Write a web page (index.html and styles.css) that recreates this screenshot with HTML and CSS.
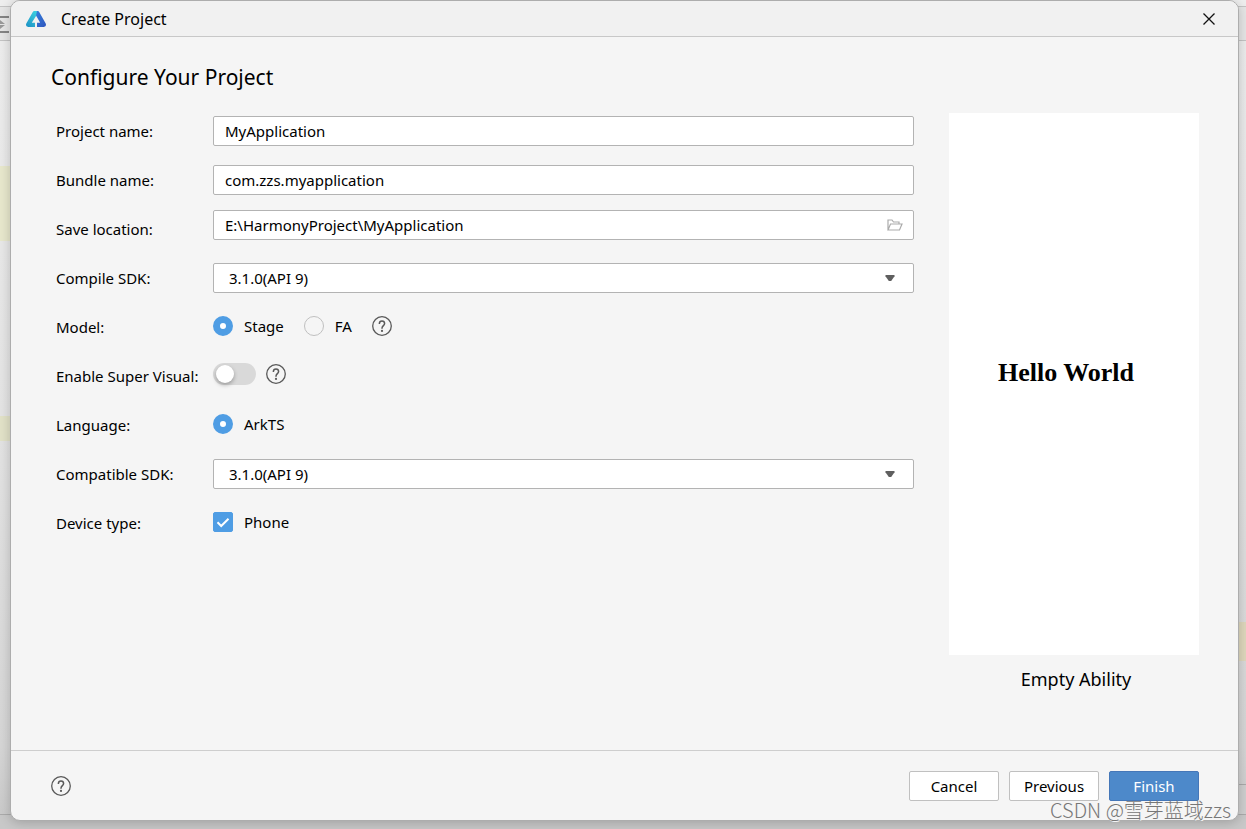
FILE: index.html
```html
<!DOCTYPE html>
<html lang="en">
<head>
<meta charset="utf-8">
<meta name="viewport" content="width=device-width, initial-scale=1">
<title>Create Project</title>
<link rel="stylesheet" href="styles.css">
</head>
<body>
<svg class="symbols" aria-hidden="true">
  <symbol id="help" viewBox="0 0 20 20">
    <circle cx="10" cy="10" r="9.3" fill="none" stroke="#595959" stroke-width="1.3"/>
    <path d="M7.4 8V7.6a2.6 2.6 0 0 1 5.2 0c0 1.9-2.6 2.3-2.6 4.6v.5" fill="none" stroke="#595959" stroke-width="1.5"/>
    <circle cx="10" cy="14.9" r="1.1" fill="#595959"/>
  </symbol>
  <symbol id="arrow" viewBox="0 0 10 6">
    <path d="M0.5 0h9v1.200L6.200 6h-2.400L0.500 1.200z" fill="#5f5f5f"/>
  </symbol>
</svg>
<div class="backdrop" aria-hidden="true">
  <div class="toolbar-edge">
    <svg class="align-icon" viewBox="0 0 9 19" width="9" height="19"><path d="M0 2h9M0 17h9" stroke="#858585" stroke-width="2"/><path d="M0 5l5 4H0zM0 14l5-4H0z" fill="#999"/></svg>
  </div>
  <div class="mark mark-one"></div>
  <div class="mark mark-two"></div>
  <div class="mark mark-three"></div>
  <div class="panel-edge"></div>
  <div class="status-edge"></div>
</div>
<div class="dialog" role="dialog" aria-labelledby="dialog-title">
  <header class="titlebar">
    <svg class="logo" viewBox="0 0 20 16" width="20" height="16" aria-hidden="true">
      <defs>
        <linearGradient id="left" x1="0" y1="1" x2="0.700" y2="0"><stop offset="0" stop-color="#1b8fc4"/><stop offset="1" stop-color="#3cd0df"/></linearGradient>
        <linearGradient id="right" x1="0" y1="0" x2="1" y2="1"><stop offset="0" stop-color="#347fdc"/><stop offset="1" stop-color="#2f55bd"/></linearGradient>
      </defs>
      <path d="M7.800 0H11l1.600 1.500L10.500 4.200 5.800 11.700H9V16H2.200Q-.8 15.600.3 12.600L6.800 1z" fill="url(#left)"/>
      <path d="M11 0h1.200l1 1 6.500 11.600q1.100 3-1.900 3.400H11v-4.300h3.200L10 4.600z" fill="url(#right)"/>
    </svg>
    <span id="dialog-title" class="title">Create Project</span>
    <button class="close" type="button" aria-label="Close"><svg viewBox="0 0 12 12" width="12" height="12"><path d="M.5.5l11 11M11.500.5l-11 11" stroke="#111" stroke-width="1.300" fill="none"/></svg></button>
  </header>
  <main class="content">
    <h1 class="heading">Configure Your Project</h1>
    <div class="columns">
      <form class="form">
        <div class="row">
          <label class="label" for="project">Project name:</label>
          <input class="field" id="project" type="text" value="MyApplication">
        </div>
        <div class="row">
          <label class="label" for="bundle">Bundle name:</label>
          <input class="field" id="bundle" type="text" value="com.zzs.myapplication">
        </div>
        <div class="row">
          <label class="label" for="location">Save location:</label>
          <div class="control control-raised">
            <input class="field" id="location" type="text" value="E:\HarmonyProject\MyApplication">
            <button class="browse" type="button" aria-label="Browse"><svg viewBox="0 0 16 12" width="16" height="12"><path d="M1 11V1h4l1.500 2H12v2M1 11l2.500-6H15l-2.500 6z" fill="none" stroke="#ababab" stroke-width="1.200"/></svg></button>
          </div>
        </div>
        <div class="row">
          <label class="label" for="compile">Compile SDK:</label>
          <div class="control">
            <select class="field select" id="compile"><option>3.1.0(API 9)</option></select>
            <svg class="arrow" width="10" height="6" aria-hidden="true"><use href="#arrow"/></svg>
          </div>
        </div>
        <div class="row" role="radiogroup" aria-labelledby="model-label">
          <span class="label" id="model-label">Model:</span>
          <div class="options">
            <label class="option"><input class="radio" type="radio" name="model" checked>Stage</label>
            <label class="option"><input class="radio" type="radio" name="model">FA</label>
            <button class="help" type="button" aria-label="About models"><svg width="20" height="20"><use href="#help"/></svg></button>
          </div>
        </div>
        <div class="row">
          <label class="label" for="visual">Enable Super Visual:</label>
          <div class="options options-switch">
            <input class="switch" id="visual" type="checkbox" role="switch">
            <button class="help" type="button" aria-label="About Super Visual"><svg width="20" height="20"><use href="#help"/></svg></button>
          </div>
        </div>
        <div class="row" role="radiogroup" aria-labelledby="language-label">
          <span class="label" id="language-label">Language:</span>
          <div class="options">
            <label class="option"><input class="radio" type="radio" name="language" checked>ArkTS</label>
          </div>
        </div>
        <div class="row">
          <label class="label" for="compatible">Compatible SDK:</label>
          <div class="control">
            <select class="field select" id="compatible"><option>3.1.0(API 9)</option></select>
            <svg class="arrow" width="10" height="6" aria-hidden="true"><use href="#arrow"/></svg>
          </div>
        </div>
        <div class="row">
          <span class="label">Device type:</span>
          <div class="options">
            <label class="option"><span class="tick"><input class="checkbox" type="checkbox" checked><svg class="tick-mark" viewBox="0 0 20 20" width="20" height="20" aria-hidden="true"><path d="M4.500 10.300l3.700 3.700 7.300-7.300" fill="none" stroke="#fff" stroke-width="2"/></svg></span>Phone</label>
          </div>
        </div>
      </form>
      <figure class="preview">
        <div class="screen">Hello World</div>
        <figcaption class="caption">Empty Ability</figcaption>
      </figure>
    </div>
  </main>
  <footer class="footer">
    <button class="help" type="button" aria-label="Help"><svg width="20" height="20"><use href="#help"/></svg></button>
    <div class="actions">
      <button class="button" type="button">Cancel</button>
      <button class="button" type="button">Previous</button>
      <button class="button button-primary" type="button">Finish</button>
    </div>
  </footer>
</div>
<div class="watermark">CSDN @雪芽蓝域zzs</div>
</body>
</html>
```

FILE: styles.css
```css
* { box-sizing: border-box; }

body {
  display: flex;
  min-height: 100vh;
  margin: 0;
  padding: 0 7px 8px 10px;
  position: relative;
  overflow: hidden;
  font-family: "Noto Sans", sans-serif;
  font-size: 15px;
  line-height: 20px;
  color: #000;
}

button, input, select { font: inherit; color: inherit; margin: 0; }
svg { display: block; }
.symbols { position: absolute; width: 0; height: 0; }

/* Editor window behind the dialog */
.backdrop {
  position: absolute;
  inset: 0;
  background: linear-gradient(#eeeeee, #e4e4e4 50%, #d6d6d6 90%, #c8c8c8);
}
.toolbar-edge {
  position: absolute;
  top: 6px;
  left: 0;
  right: 0;
  height: 35px;
  padding-top: 8px;
  background: #e6e6e6;
  border-top: 1px solid #c4c4c4;
  border-bottom: 1px solid #c4c4c4;
}
.mark { position: absolute; width: 12px; }
.mark-one { left: 0; top: 166px; height: 75px; background: #e8e8cd; }
.mark-two { left: 0; top: 416px; height: 25px; background: #e2e2c8; }
.mark-three { right: 0; top: 622px; height: 39px; background: #dfd8bd; }
.panel-edge {
  position: absolute;
  right: 0;
  bottom: 15px;
  width: 12px;
  height: 30px;
  background: #cfcfcf;
  border-top: 1px solid #aaa;
}
.status-edge {
  position: absolute;
  left: 0;
  right: 0;
  bottom: 0;
  height: 15px;
  background: #c8c8c8;
  border-top: 1px solid #aaa;
}

.dialog {
  position: relative;
  flex: 1;
  display: flex;
  flex-direction: column;
  overflow: hidden;
  background: #f5f5f5;
  border: 1px solid #adadad;
  border-radius: 10px;
  box-shadow: 0 2px 12px rgba(0, 0, 0, 0.2);
}

.titlebar {
  display: flex;
  align-items: center;
  height: 36px;
  padding: 0 23px 0 15px;
  background: #f1f1f1;
  border-bottom: 1px solid #c8c8c8;
}
.title { flex: 1; margin-left: 15px; font-size: 16px; }
.close, .help, .browse { padding: 0; border: 0; background: none; }

.content { flex: 1; padding: 26px 39px 0 40px; }
.heading {
  margin: 0;
  font-size: 21px;
  font-weight: 400;
  line-height: 28px;
}
.columns {
  display: grid;
  grid-template-columns: 1fr 250px;
  gap: 35px;
  padding-top: 15px;
}

.form { padding-left: 5px; }
.row {
  display: grid;
  grid-template-columns: 157px 1fr;
  align-items: center;
  height: 49px;
}
.label { white-space: nowrap; }
.control { position: relative; }
.control-raised { padding-bottom: 8px; }
.field {
  display: block;
  width: 100%;
  height: 30px;
  padding: 0 11px;
  border: 1px solid #b3b3b3;
  border-radius: 2px;
  background: #fff;
  outline: 0;
}
.select { appearance: none; padding: 0 15px; }
.arrow { position: absolute; right: 19px; top: 12px; pointer-events: none; }
.browse { position: absolute; right: 11px; top: 9px; }

.options { display: flex; align-items: center; gap: 20px; padding-bottom: 2px; }
.options-switch { gap: 10px; padding-bottom: 4px; }
.option { display: flex; align-items: center; gap: 11px; }
.radio {
  appearance: none;
  width: 20px;
  height: 20px;
  border: 1px solid #c0c0c0;
  border-radius: 50%;
}
.radio:checked { border: 7px solid #4f9de4; background: #fff; }
.tick { position: relative; }
.checkbox {
  display: block;
  appearance: none;
  width: 20px;
  height: 20px;
  border: 1px solid #c0c0c0;
  border-radius: 2px;
}
.checkbox:checked { background: #4f9de4; border-color: #4f9de4; }
.tick-mark { position: absolute; inset: 0; pointer-events: none; }
.switch {
  appearance: none;
  width: 43px;
  height: 22px;
  padding: 2px 3px;
  border-radius: 11px;
  background: #d9d9d9;
}
.switch::before {
  content: "";
  display: block;
  width: 18px;
  height: 18px;
  border-radius: 50%;
  background: #fff;
  box-shadow: 0 2px 4px rgba(0, 0, 0, 0.3);
}

.preview { margin: 0; padding-top: 7px; }
.screen {
  display: flex;
  align-items: center;
  justify-content: center;
  height: 542px;
  padding: 0 16px 22px 0;
  background: #fff;
  font: bold 26px/30px "Liberation Serif", serif;
}
.caption {
  padding: 12px 0 0 4px;
  font-size: 18px;
  line-height: 24px;
  text-align: center;
}

.footer {
  display: flex;
  align-items: center;
  justify-content: space-between;
  height: 70px;
  padding: 1px 39px 0 40px;
  border-top: 1px solid #cecece;
}
.actions { display: flex; gap: 10px; }
.button {
  width: 90px;
  height: 30px;
  padding: 0;
  border: 1px solid #c0c0c0;
  border-radius: 2px;
  background: #fff;
}
.button-primary { background: #4d89ca; border-color: #4577b8; color: #fff; }

.watermark {
  position: absolute;
  right: 15px;
  bottom: 5px;
  font-family: "Noto Sans CJK SC", sans-serif;
  font-size: 20px;
  font-weight: 300;
  line-height: 28px;
  color: #777;
  text-shadow: 1px 1px 0 #f4f4f4;
  white-space: nowrap;
}
```
